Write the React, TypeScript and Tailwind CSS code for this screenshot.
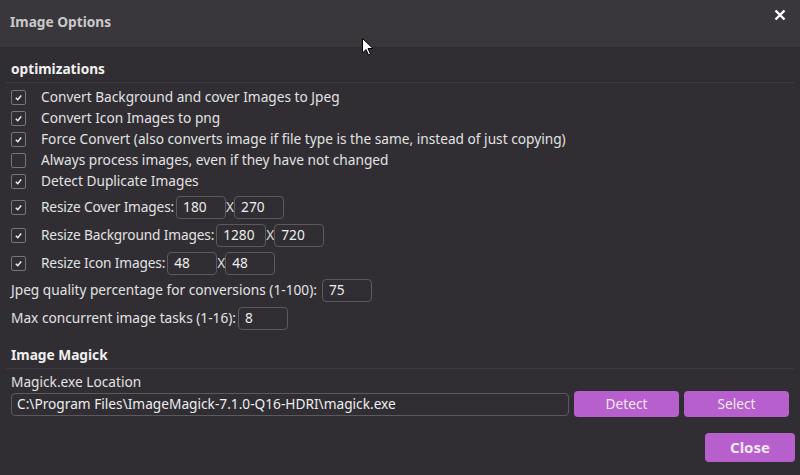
import React from "react";

const font = { fontFamily: '"Noto Sans", "Open Sans", sans-serif' };

const Check = ({ checked }: { checked: boolean }) => (
  <span className="w-[15px] h-[15px] border border-[#77757a] rounded-[2px] flex items-center justify-center shrink-0">
    {checked && (
      <svg width="9" height="9" viewBox="0 0 10 10">
        <path d="M2 5.2 L4.2 7.4 L8 2.8" fill="none" stroke="#f2f2f2" strokeWidth="1.6" />
      </svg>
    )}
  </span>
);

const Field = ({ value, w = "w-[50px]" }: { value: string; w?: string }) => (
  <div className={`${w} h-[23px] border border-[#5c5a5f] rounded-[4px] px-[6px] flex items-center text-[#ededed]`}>
    {value}
  </div>
);

const CheckRow = ({ label, checked = true }: { label: string; checked?: boolean }) => (
  <div className="h-[21px] flex items-center">
    <Check checked={checked} />
    <span className="ml-[15px]">{label}</span>
  </div>
);

const SizeRow = ({ label, a, b }: { label: string; a: string; b: string }) => (
  <div className="h-[28px] flex items-center">
    <Check checked />
    <span className="ml-[15px] mr-[2px] tracking-[-0.15px]">{label}</span>
    <Field value={a} />
    <span className="text-[#dcdcdc]">X</span>
    <Field value={b} />
  </div>
);

const Cursor = () => (
  <svg className="absolute left-[362px] top-[38px]" width="12" height="19" viewBox="0 0 12 19">
    <path d="M0.5 0.5 L0.5 15 L4 11.5 L6.5 17 L8.5 16 L6 10.5 L11 10.5 Z" fill="#fff" stroke="#000" strokeWidth="1" />
  </svg>
);

export default function App() {
  return (
    <div className="relative w-[800px] h-[475px] bg-[#302e33] text-[#e2e2e2] text-[13.7px] overflow-hidden" style={font}>
      <div className="h-[47px] bg-[#39373b] flex items-center justify-between pl-[10px] pr-[14px]">
        <span className="font-bold text-[#c9c9c9] text-[13.7px] -mt-[2px]">Image Options</span>
        <svg className="-mt-[17px]" width="12" height="12" viewBox="0 0 12 12">
          <path d="M1.5 1.5 L10.5 10.5 M10.5 1.5 L1.5 10.5" stroke="#fff" strokeWidth="2.4" />
        </svg>
      </div>
      <Cursor />

      <div className="px-[11px]">
        <div className="pt-[12px] h-[35px] font-bold text-[#f0f0f0] leading-[20px]">optimizations</div>
        <div className="h-px bg-[#3b393e] -mx-[5px]" />
        <div className="pt-[4px] flex flex-col">
          <CheckRow label="Convert Background and cover Images to Jpeg" />
          <CheckRow label="Convert Icon Images to png" />
          <CheckRow label="Force Convert (also converts image if file type is the same, instead of just copying)" />
          <CheckRow label="Always process images, even if they have not changed" checked={false} />
          <CheckRow label="Detect Duplicate Images" />
          <div className="h-px" />
          <SizeRow label="Resize Cover Images:" a="180" b="270" />
          <SizeRow label="Resize Background Images:" a="1280" b="720" />
          <SizeRow label="Resize Icon Images:" a="48" b="48" />
          <div className="h-[27px] flex items-center">
            <span className="mr-[5px]">Jpeg quality percentage for conversions (1-100):</span>
            <Field value="75" />
          </div>
          <div className="h-[28px] flex items-center">
            <span className="mr-[2px]">Max concurrent image tasks (1-16):</span>
            <Field value="8" />
          </div>
        </div>

        <div className="pt-[11px] h-[36px] font-bold text-[#f0f0f0] leading-[24px]">Image Magick</div>
        <div className="h-px bg-[#3b393e] -mx-[5px]" />
        <div className="pt-[4px] leading-[18px]">Magick.exe Location</div>
        <div className="flex items-center gap-[5px]">
          <div className="w-[558px] h-[23px] border border-[#5c5a5f] rounded-[4px] px-[5px] flex items-center text-[#ededed]">
            C:\Program Files\ImageMagick-7.1.0-Q16-HDRI\magick.exe
          </div>
          <button className="w-[105px] h-[26px] rounded-[4px] bg-[#b65fcd] text-[#f3e9f5]">Detect</button>
          <button className="w-[105px] h-[26px] rounded-[4px] bg-[#b65fcd] text-[#f3e9f5]">Select</button>
        </div>
        <div className="mt-[16px] flex justify-end -mr-[6px]">
          <button className="w-[90px] h-[29px] rounded-[4px] bg-[#b65fcd] text-[#f3e9f5] font-bold text-[15px]">Close</button>
        </div>
      </div>
    </div>
  );
}
